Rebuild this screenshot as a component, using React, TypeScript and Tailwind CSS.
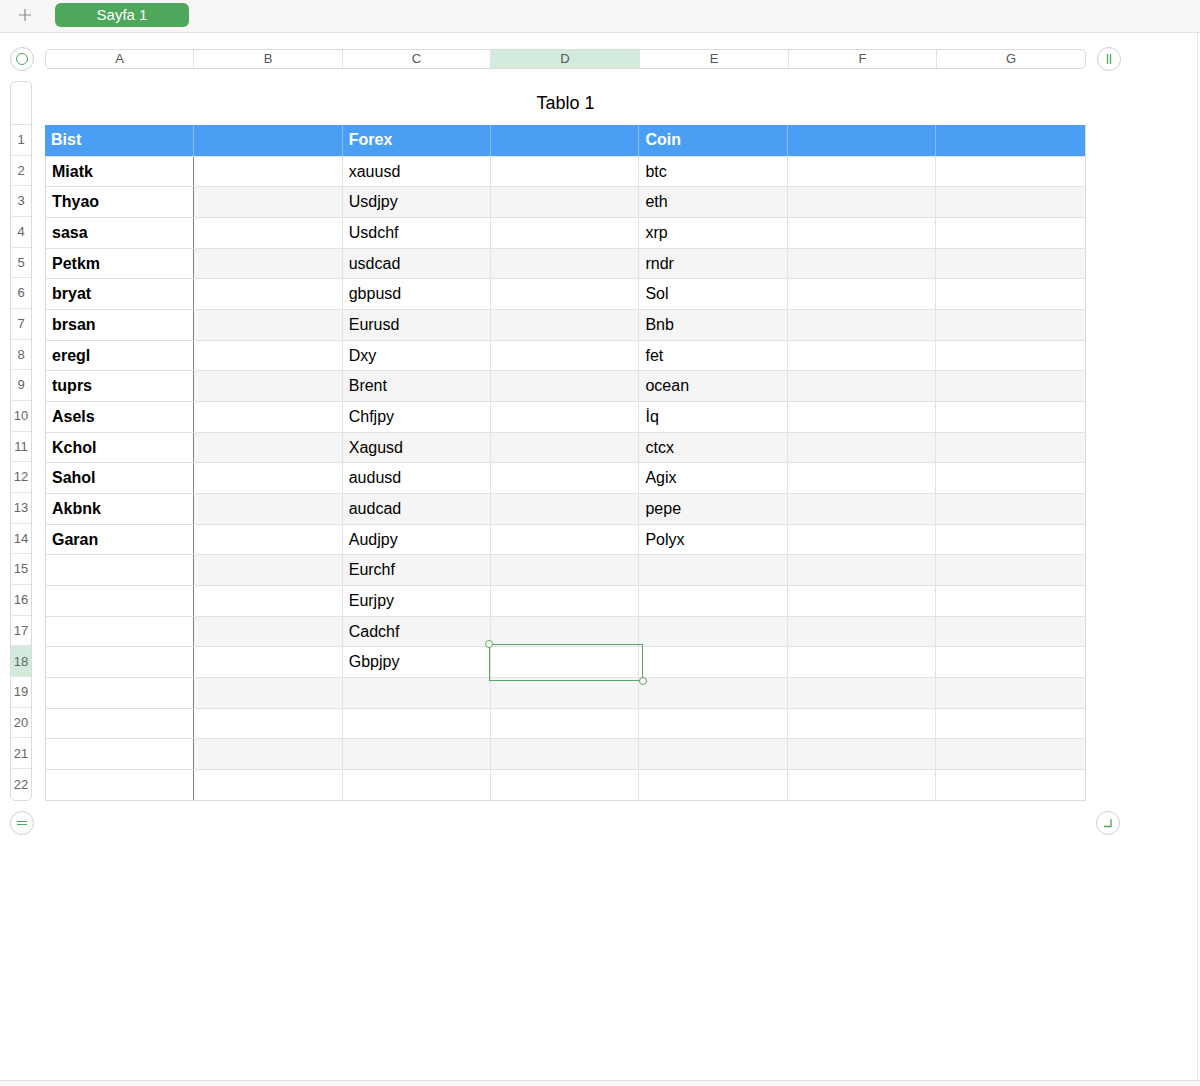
import React from "react";

const COLS = ["A", "B", "C", "D", "E", "F", "G"];
const WIDTHS = [149, 149, 148, 149, 149, 148, 149];

const colA = ["Bist", "Miatk", "Thyao", "sasa", "Petkm", "bryat", "brsan", "eregl", "tuprs", "Asels", "Kchol", "Sahol", "Akbnk", "Garan"];
const colC = ["Forex", "xauusd", "Usdjpy", "Usdchf", "usdcad", "gbpusd", "Eurusd", "Dxy", "Brent", "Chfjpy", "Xagusd", "audusd", "audcad", "Audjpy", "Eurchf", "Eurjpy", "Cadchf", "Gbpjpy"];
const colE = ["Coin", "btc", "eth", "xrp", "rndr", "Sol", "Bnb", "fet", "ocean", "İq", "ctcx", "Agix", "pepe", "Polyx"];

const ROW_COUNT = 22;
const ROW_H = 30.68;

function RoundButton({ children }: { children: React.ReactNode }) {
  return (
    <div className="w-[24px] h-[24px] rounded-full border border-[#cfcfcf] bg-white flex items-center justify-center shrink-0">
      {children}
    </div>
  );
}

function cellText(row: number, col: number) {
  if (col === 0) return colA[row] ?? "";
  if (col === 2) return colC[row] ?? "";
  if (col === 4) return colE[row] ?? "";
  return "";
}

export default function App() {
  const rows = Array.from({ length: ROW_COUNT }, (_, i) => i);

  return (
    <div className="w-[1200px] h-[1086px] flex flex-col bg-white font-['Liberation_Sans',Arial,sans-serif] text-black">
      {/* sheet tabs */}
      <div className="h-[33px] shrink-0 bg-[#f6f6f6] border-b border-[#e2e2e2] flex items-center">
        <div className="w-[55px] flex justify-center">
          <svg width="14" height="14" viewBox="0 0 14 14" className="ml-[-6px] mt-[-2px]">
            <path d="M7 1v12M1 7h12" stroke="#8a8a8a" strokeWidth="1.2" />
          </svg>
        </div>
        <div className="w-[134px] h-[24px] mt-[-2px] rounded-[6px] bg-[#4ea75b] text-white text-[15px] flex items-center justify-center">
          Sayfa 1
        </div>
      </div>

      {/* canvas */}
      <div className="flex-1 w-[1198px] border-r border-[#e4e4e4] pl-[10px]">
        {/* column header bar */}
        <div className="flex items-center mt-[14px] h-[24px]">
          <RoundButton>
            <div className="w-[12px] h-[12px] rounded-full border-[1.5px] border-[#4ea75b]" />
          </RoundButton>
          <div className="ml-[11px] flex h-[20px] border border-[#dadada] rounded-[5px] overflow-hidden">
            {COLS.map((c, i) => (
              <div
                key={c}
                style={{ width: WIDTHS[i] - (i === 0 || i === 6 ? 1 : 0) }}
                className={`flex items-center justify-center text-[13px] text-[#555] ${i < 6 ? "border-r border-[#e2e2e2]" : ""} ${c === "D" ? "bg-[#d2ebdc]" : ""}`}
              >
                {c}
              </div>
            ))}
          </div>
          <div className="ml-[11px]">
            <RoundButton>
              <svg width="10" height="12" viewBox="0 0 10 12">
                <path d="M3.5 1v10M6.5 1v10" stroke="#4ea75b" strokeWidth="1.3" />
              </svg>
            </RoundButton>
          </div>
        </div>

        {/* table area */}
        <div className="flex mt-[10px]">
          {/* row numbers */}
          <div className="w-[22px] border border-[#dcdcdc] rounded-[5px] overflow-hidden shrink-0 h-[720px]">
            <div className="h-[43px] border-b border-[#e2e2e2]" />
            {rows.map((r) => (
              <div
                key={r}
                style={{ height: ROW_H }}
                className={`flex items-center justify-center text-[13px] text-[#666] ${r < ROW_COUNT - 1 ? "border-b border-[#e6e6e6]" : ""} ${r === 17 ? "bg-[#d2ebdc]" : ""}`}
              >
                {r + 1}
              </div>
            ))}
          </div>

          {/* table */}
          <div className="ml-[13px] w-[1041px] relative">
            <div className="h-[44px] flex items-center justify-center text-[18px]">Tablo 1</div>
            <div className="border-b border-r border-[#dcdcdc]">
              {rows.map((r) => {
                const header = r === 0;
                const striped = !header && r % 2 === 0;
                return (
                  <div
                    key={r}
                    style={{ height: ROW_H }}
                    className={`flex ${header ? "bg-[#4a9ff5]" : "border-t border-[#e2e2e2]"}`}
                  >
                    {COLS.map((c, ci) => {
                      const txt = cellText(r, ci);
                      let cls = "";
                      if (header) {
                        cls = `text-white font-bold ${ci < 6 ? "border-r border-[#86bff8]" : ""}`;
                      } else if (ci === 0) {
                        cls = "font-bold border-l border-[#dcdcdc] border-r border-r-[#808080] bg-white";
                      } else {
                        cls = `${striped ? "bg-[#f5f5f5]" : "bg-white"} ${ci < 6 ? "border-r border-[#e2e2e2]" : ""}`;
                      }
                      return (
                        <div
                          key={c}
                          style={{ width: WIDTHS[ci] }}
                          className={`flex items-center pl-[6px] text-[16px] leading-none ${cls}`}
                        >
                          {txt}
                        </div>
                      );
                    })}
                  </div>
                );
              })}
            </div>

            {/* selection */}
            <div className="absolute left-[444px] top-[563px] w-[154px] h-[37px] border border-[#5aa566]">
              <div className="absolute -left-[5px] -top-[5px] w-[8px] h-[8px] rounded-full border border-[#5aa566] bg-white" />
              <div className="absolute -right-[5px] -bottom-[5px] w-[8px] h-[8px] rounded-full border border-[#5aa566] bg-white" />
            </div>
          </div>
        </div>

        {/* bottom controls */}
        <div className="flex items-center mt-[10px] w-[1110px] justify-between">
          <RoundButton>
            <svg width="12" height="8" viewBox="0 0 12 8">
              <path d="M1 2.5h10M1 5.5h10" stroke="#4ea75b" strokeWidth="1.2" />
            </svg>
          </RoundButton>
          <RoundButton>
            <svg width="12" height="12" viewBox="0 0 12 12">
              <path d="M9 2v7.5H2" stroke="#4ea75b" strokeWidth="1.3" fill="none" />
            </svg>
          </RoundButton>
        </div>
      </div>

      {/* bottom strip */}
      <div className="h-[6px] shrink-0 border-t border-[#dedede] bg-[#f8f8f8]" />
    </div>
  );
}
